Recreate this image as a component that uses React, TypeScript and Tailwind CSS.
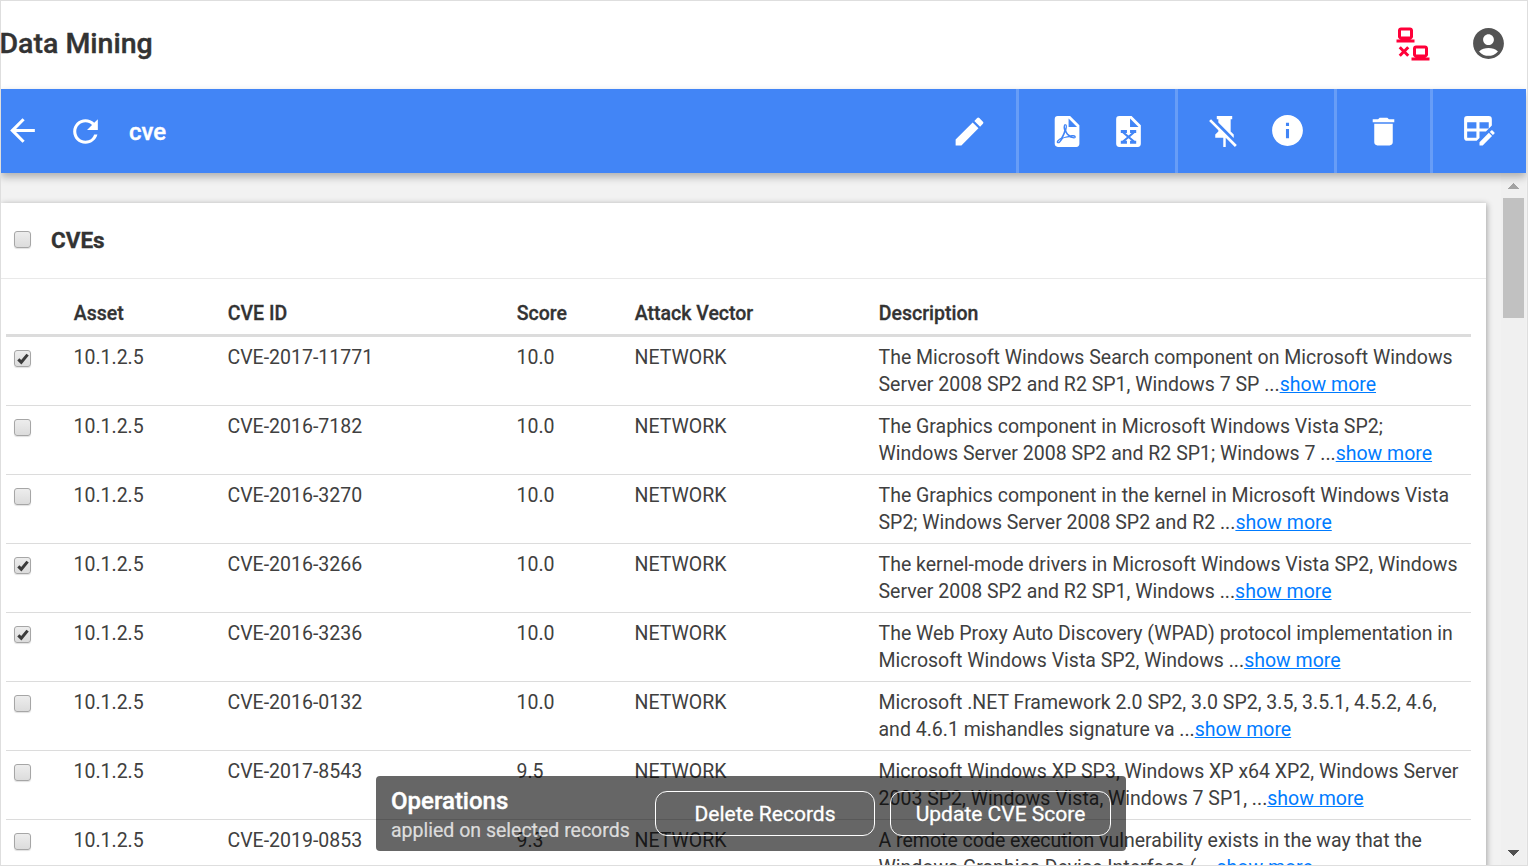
import type { ReactNode } from 'react';
import { MdAccountCircle, MdArrowBack, MdDelete, MdEdit, MdInfo, MdRefresh } from 'react-icons/md';

const paths = {
  lanDisconnect:
    'M4,1C2.89,1 2,1.89 2,3V7C2,8.11 2.89,9 4,9H1V11H13V9H10C11.11,9 12,8.11 12,7V3C12,1.89 11.11,1 10,1H4M4,3H10V7H4V3M14,13C12.89,13 12,13.89 12,15V19C12,20.11 12.89,21 14,21H11V23H23V21H20C21.11,21 22,20.11 22,19V15C22,13.89 21.11,13 20,13H14M3.88,13.46L2.46,14.88L4.59,17L2.46,19.12L3.88,20.54L6,18.41L8.12,20.54L9.54,19.12L7.41,17L9.54,14.88L8.12,13.46L6,15.59L3.88,13.46M14,15H20V19H14V15Z',
  pdf: 'M14,9H19.5L14,3.5V9M7,2H15L21,8V20A2,2 0 0,1 19,22H7C5.89,22 5,21.1 5,20V4A2,2 0 0,1 7,2M11.93,12.44C12.34,13.34 12.86,14.08 13.46,14.59L13.87,14.91C13,15.07 11.8,15.35 10.53,15.84V15.84L10.42,15.88L10.92,14.84C11.37,13.97 11.7,13.18 11.93,12.44M18.41,16.25C18.59,16.07 18.68,15.84 18.69,15.59C18.72,15.39 18.67,15.2 18.57,15.04C18.28,14.57 17.53,14.35 16.29,14.35L15,14.42L14.13,13.84C13.5,13.32 12.93,12.41 12.53,11.28L12.57,11.14C12.9,9.81 13.21,8.2 12.55,7.54C12.39,7.38 12.17,7.3 11.94,7.3H11.7C11.33,7.3 11,7.69 10.91,8.07C10.54,9.4 10.76,10.13 11.13,11.34V11.35C10.88,12.23 10.56,13.25 10.05,14.28L9.09,16.08L8.2,16.57C7,17.32 6.43,18.16 6.32,18.69C6.28,18.88 6.3,19.05 6.37,19.23L6.4,19.28L6.88,19.59L7.32,19.7C8.13,19.7 9.05,18.75 10.29,16.63L10.47,16.56C11.5,16.23 12.78,16 14.5,15.81C15.53,16.32 16.74,16.55 17.5,16.55C17.94,16.55 18.24,16.44 18.41,16.25M18,15.54L18.09,15.65C18.08,15.75 18.05,15.76 18,15.78H17.96L17.77,15.8C17.31,15.8 16.6,15.61 15.87,15.29C15.96,15.19 16,15.19 16.1,15.19C17.5,15.19 17.9,15.44 18,15.54M8.83,17C8.18,18.19 7.59,18.85 7.14,19C7.19,18.62 7.64,17.96 8.35,17.31L8.83,17M11.85,10.09C11.62,9.19 11.61,8.46 11.78,8.04L11.85,7.92L12,7.97C12.17,8.21 12.19,8.53 12.09,9.07L12.06,9.23L11.9,10.05L11.85,10.09Z',
  excel:
    'M6,2H14L20,8V20A2,2 0 0,1 18,22H6A2,2 0 0,1 4,20V4A2,2 0 0,1 6,2M13,3.5V9H18.5L13,3.5M17,11H13V13H14L12,14.67L10,13H11V11H7V13H8L11,15.5L8,18H7V20H11V18H10L12,16.33L14,18H13V20H17V18H16L13,15.5L16,13H17V11Z',
  pinOff:
    'M2,5.27L3.28,4L20,20.72L18.73,22L12.8,16.07V22H11.2V16H6V14L8,12V11.27L2,5.27M16,12L18,14V16H17.82L8,6.18V4H7V2H17V4H16V12Z',
  tableEdit:
    'M21.7,13.35L20.7,14.35L18.65,12.3L19.65,11.3C19.86,11.09 20.21,11.09 20.42,11.3L21.7,12.58C21.91,12.79 21.91,13.14 21.7,13.35M12,18.94V21H14.06L20.12,14.88L18.07,12.83L12,18.94M4,2H18A2,2 0 0,1 20,4V8.17L16.17,12H12V16.17L10.17,18H4A2,2 0 0,1 2,16V4A2,2 0 0,1 4,2M4,6V10H10V6H4M12,6V10H18V6H12M4,12V16H10V12H4Z',
};

function Icon({ name, className }: { name: keyof typeof paths; className: string }) {
  return (
    <svg viewBox="0 0 24 24" fill="currentColor" className={className}>
      <path d={paths[name]} />
    </svg>
  );
}

function Checkbox({ checked = false }: { checked?: boolean }) {
  return (
    <span className="flex size-[17px] shrink-0 items-center justify-center rounded-[3px] border border-[#a6a6a6] bg-linear-to-b from-[#ededed] to-[#dcdcdc] shadow-[0_1px_1px_rgba(0,0,0,0.12)]">
      {checked && (
        <svg viewBox="0 0 12 12" className="size-[12px] text-[#3c3c3c]" fill="none" stroke="currentColor" strokeWidth="3">
          <path d="M1.3 6.3 L4.3 9.2 L10.6 1.6" />
        </svg>
      )}
    </span>
  );
}

function ToolGroup({ children, last = false }: { children: ReactNode; last?: boolean }) {
  return (
    <div className={last ? 'flex items-center gap-[26px] px-[28px] pt-px' : 'flex items-center gap-[26px] border-r-3 border-white/20 px-[28px] pt-px'}>
      {children}
    </div>
  );
}

type Row = { id: string; score: string; on?: boolean; a: string; b: string };

const rows: Row[] = [
  { id: 'CVE-2017-11771', score: '10.0', on: true, a: 'The Microsoft Windows Search component on Microsoft Windows', b: 'Server 2008 SP2 and R2 SP1, Windows 7 SP ...' },
  { id: 'CVE-2016-7182', score: '10.0', a: 'The Graphics component in Microsoft Windows Vista SP2;', b: 'Windows Server 2008 SP2 and R2 SP1; Windows 7 ...' },
  { id: 'CVE-2016-3270', score: '10.0', a: 'The Graphics component in the kernel in Microsoft Windows Vista', b: 'SP2; Windows Server 2008 SP2 and R2 ...' },
  { id: 'CVE-2016-3266', score: '10.0', on: true, a: 'The kernel-mode drivers in Microsoft Windows Vista SP2, Windows', b: 'Server 2008 SP2 and R2 SP1, Windows ...' },
  { id: 'CVE-2016-3236', score: '10.0', on: true, a: 'The Web Proxy Auto Discovery (WPAD) protocol implementation in', b: 'Microsoft Windows Vista SP2, Windows ...' },
  { id: 'CVE-2016-0132', score: '10.0', a: 'Microsoft .NET Framework 2.0 SP2, 3.0 SP2, 3.5, 3.5.1, 4.5.2, 4.6,', b: 'and 4.6.1 mishandles signature va ...' },
  { id: 'CVE-2017-8543', score: '9.5', a: 'Microsoft Windows XP SP3, Windows XP x64 XP2, Windows Server', b: '2003 SP2, Windows Vista, Windows 7 SP1, ...' },
  { id: 'CVE-2019-0853', score: '9.3', a: 'A remote code execution vulnerability exists in the way that the', b: 'Windows Graphics Device Interface ( ...' },
];

export default function App() {
  return (
    <div className="relative flex h-[866px] w-[1528px] flex-col overflow-hidden border border-[#dedede] bg-white font-['Roboto',sans-serif] text-[#333]">
      <header className="flex h-[88px] shrink-0 items-center justify-between pr-[20px] pb-[3px]">
        <h1 className="-ml-[1.5px] pt-[2px] text-[28.5px] leading-none font-medium [-webkit-text-stroke:0.4px]">Data Mining</h1>
        <div className="flex items-center gap-[39px]">
          <Icon name="lanDisconnect" className="size-[36px] text-[#ff0039]" />
          <MdAccountCircle className="size-[37px] text-[#545454]" />
        </div>
      </header>

      <nav className="relative z-10 mr-px flex h-[84px] shrink-0 justify-between bg-[#4285f6] text-white shadow-[0_4px_8px_rgba(0,0,0,0.28)]">
        <div className="flex items-center pt-px pl-[3px]">
          <MdArrowBack className="mb-[2px] size-[37px]" />
          <MdRefresh className="ml-[26px] size-[37px]" />
          <span className="ml-[25px] pt-px text-[24px] leading-none font-medium [-webkit-text-stroke:0.4px]">cve</span>
        </div>
        <div className="flex">
          <ToolGroup><MdEdit className="size-[37px]" /></ToolGroup>
          <ToolGroup>
            <Icon name="pdf" className="size-[37px]" />
            <Icon name="excel" className="size-[37px]" />
          </ToolGroup>
          <ToolGroup>
            <Icon name="pinOff" className="size-[37px]" />
            <MdInfo className="mb-[2px] size-[37px]" />
          </ToolGroup>
          <ToolGroup><MdDelete className="size-[37px]" /></ToolGroup>
          <ToolGroup last><Icon name="tableEdit" className="size-[37px]" /></ToolGroup>
        </div>
      </nav>

      <div className="flex min-h-0 flex-1 justify-between overflow-hidden bg-[#f2f2f2]">
        <main className="mt-[30px] h-[760px] w-[1485px] bg-white shadow-[1px_1px_6px_rgba(0,0,0,0.32)]">
          <div className="flex h-[76px] items-center gap-[20px] border-b border-[#e9e9e9] pl-[13px]">
            <div className="pb-[2px]"><Checkbox /></div>
            <h2 className="text-[22.5px] leading-none font-bold [-webkit-text-stroke:0.3px]">CVEs</h2>
          </div>
          <div className="ml-[5px] w-[1465px] text-[19.5px] leading-[27px]">
            <div className="grid h-[58px] grid-cols-[67.75px_154px_289px_118px_244px_1fr] border-b-3 border-[#dcdcdc] pt-[21px] font-medium [-webkit-text-stroke:0.3px]">
              <span />
              <span>Asset</span>
              <span>CVE ID</span>
              <span>Score</span>
              <span>Attack Vector</span>
              <span>Description</span>
            </div>
            {rows.map((r) => (
              <div key={r.id} className="grid h-[69px] grid-cols-[67.5px_154px_289px_118px_244px_1fr] border-b border-[#dcdcdc] pt-[7px] whitespace-nowrap text-[#404040]">
                <div className="pt-[6px] pl-[8px]"><Checkbox checked={r.on} /></div>
                <span>10.1.2.5</span>
                <span>{r.id}</span>
                <span>{r.score}</span>
                <span>NETWORK</span>
                <p>
                  {r.a}
                  <br />
                  {r.b}
                  <a className="text-[#007bff] underline">show more</a>
                </p>
              </div>
            ))}
          </div>
        </main>
        <aside className="mr-px flex w-[25px] flex-col items-center bg-[#f0f0f0] pt-[10px] pb-[9px]">
          <svg viewBox="0 0 11 6" className="h-[6px] w-[11px]" shapeRendering="crispEdges"><path d="M0 6 L5.5 0 L11 6Z" fill="#a3a3a3" /></svg>
          <div className="mt-[9px] h-[120px] w-[21px] bg-[#c1c1c1]" />
          <svg viewBox="0 0 11 6" className="mt-auto h-[6px] w-[11px]" shapeRendering="crispEdges"><path d="M0 0 L5.5 6 L11 0Z" fill="#505050" /></svg>
        </aside>
      </div>

      <div className="absolute top-[775px] left-[375px] z-20 flex h-[75px] w-[750px] items-center rounded-[4px] bg-black/60 pl-[15px] text-white">
        <div className="w-[264px] pt-[4px] whitespace-nowrap">
          <div className="text-[24px] leading-[30px] font-medium [-webkit-text-stroke:0.4px]">Operations</div>
          <div className="text-[19.5px] leading-[30px] text-white/75 [-webkit-text-stroke:0.2px]">applied on selected records</div>
        </div>
        <button className="h-[45px] w-[220px] rounded-[12px] border-[1.5px] border-white pt-[2px] text-[21px] [-webkit-text-stroke:0.3px]">Delete Records</button>
        <button className="ml-[15px] h-[45px] w-[221px] rounded-[12px] border-[1.5px] border-white pt-[2px] text-[21px] [-webkit-text-stroke:0.3px]">Update CVE Score</button>
      </div>
    </div>
  );
}
